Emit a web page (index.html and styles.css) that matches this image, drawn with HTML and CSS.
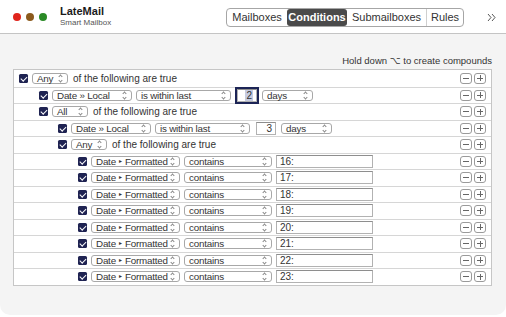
FILE: index.html
```html
<!DOCTYPE html>
<html>
    <head>
        <title>LateMail</title>
        <link rel="stylesheet" href="styles.css">
    </head>
    <body>
        <div class="window">
            <header class="titlebar">
                <div class="lights">
                    <span class="light red"></span>
                    <span class="light amber"></span>
                    <span class="light green"></span>
                </div>
                <div class="title">
                    <div class="name">LateMail</div>
                    <div class="sub">Smart Mailbox</div>
                </div>
                <nav class="segments">
                    <span class="seg seg-mail">Mailboxes</span>
                    <span class="seg seg-cond active">Conditions</span>
                    <span class="seg seg-sub">Submailboxes</span>
                    <span class="seg seg-rules">Rules</span>
                </nav>
                <svg class="more" width="9" height="9" viewBox="0 0 9 9">
                    <path d="M1 1 L4 4.5 L1 8 M5 1 L8 4.5 L5 8" stroke="#444" stroke-width="0.9" fill="none"/>
                </svg>
            </header>

            <main class="content">
                <p class="hint">Hold down ⌥ to create compounds</p>

                <div class="rules">
                    <div class="row l0">
                        <span class="check"></span>
                        <span class="popup w-any">Any<i></i></span>
                        <span class="label">of the following are true</span>
                        <span class="steppers"><b class="minus"></b><b class="plus"></b></span>
                    </div>
                    <div class="row l1">
                        <span class="check"></span>
                        <span class="popup w-local">Date » Local<i></i></span>
                        <span class="popup w-within">is within last<i></i></span>
                        <span class="field num focus"><span class="sel">2</span></span>
                        <span class="popup w-days">days<i></i></span>
                        <span class="steppers"><b class="minus"></b><b class="plus"></b></span>
                    </div>
                    <div class="row l1">
                        <span class="check"></span>
                        <span class="popup w-any">All<i></i></span>
                        <span class="label">of the following are true</span>
                        <span class="steppers"><b class="minus"></b><b class="plus"></b></span>
                    </div>
                    <div class="row l2">
                        <span class="check"></span>
                        <span class="popup w-local">Date » Local<i></i></span>
                        <span class="popup w-within">is within last<i></i></span>
                        <span class="field num">3</span>
                        <span class="popup w-days">days<i></i></span>
                        <span class="steppers"><b class="minus"></b><b class="plus"></b></span>
                    </div>
                    <div class="row l2">
                        <span class="check"></span>
                        <span class="popup w-any">Any<i></i></span>
                        <span class="label">of the following are true</span>
                        <span class="steppers"><b class="minus"></b><b class="plus"></b></span>
                    </div>
                    <div class="row l3">
                        <span class="check"></span>
                        <span class="popup w-formatted">Date <span class="sep">▸</span> Formatted<i></i></span>
                        <span class="popup w-contains">contains<i></i></span>
                        <span class="field text">16:</span>
                        <span class="steppers"><b class="minus"></b><b class="plus"></b></span>
                    </div>
                    <div class="row l3">
                        <span class="check"></span>
                        <span class="popup w-formatted">Date <span class="sep">▸</span> Formatted<i></i></span>
                        <span class="popup w-contains">contains<i></i></span>
                        <span class="field text">17:</span>
                        <span class="steppers"><b class="minus"></b><b class="plus"></b></span>
                    </div>
                    <div class="row l3">
                        <span class="check"></span>
                        <span class="popup w-formatted">Date <span class="sep">▸</span> Formatted<i></i></span>
                        <span class="popup w-contains">contains<i></i></span>
                        <span class="field text">18:</span>
                        <span class="steppers"><b class="minus"></b><b class="plus"></b></span>
                    </div>
                    <div class="row l3">
                        <span class="check"></span>
                        <span class="popup w-formatted">Date <span class="sep">▸</span> Formatted<i></i></span>
                        <span class="popup w-contains">contains<i></i></span>
                        <span class="field text">19:</span>
                        <span class="steppers"><b class="minus"></b><b class="plus"></b></span>
                    </div>
                    <div class="row l3">
                        <span class="check"></span>
                        <span class="popup w-formatted">Date <span class="sep">▸</span> Formatted<i></i></span>
                        <span class="popup w-contains">contains<i></i></span>
                        <span class="field text">20:</span>
                        <span class="steppers"><b class="minus"></b><b class="plus"></b></span>
                    </div>
                    <div class="row l3">
                        <span class="check"></span>
                        <span class="popup w-formatted">Date <span class="sep">▸</span> Formatted<i></i></span>
                        <span class="popup w-contains">contains<i></i></span>
                        <span class="field text">21:</span>
                        <span class="steppers"><b class="minus"></b><b class="plus"></b></span>
                    </div>
                    <div class="row l3">
                        <span class="check"></span>
                        <span class="popup w-formatted">Date <span class="sep">▸</span> Formatted<i></i></span>
                        <span class="popup w-contains">contains<i></i></span>
                        <span class="field text">22:</span>
                        <span class="steppers"><b class="minus"></b><b class="plus"></b></span>
                    </div>
                    <div class="row l3">
                        <span class="check"></span>
                        <span class="popup w-formatted">Date <span class="sep">▸</span> Formatted<i></i></span>
                        <span class="popup w-contains">contains<i></i></span>
                        <span class="field text">23:</span>
                        <span class="steppers"><b class="minus"></b><b class="plus"></b></span>
                    </div>
                </div>
            </main>
        </div>
    </body>
</html>
```

FILE: styles.css
```css
* {
    box-sizing: border-box;
}
body {
    margin: 0;
    background-color: #fff;
    font-family: "Liberation Sans", "DejaVu Sans", Arial, sans-serif;
    color: #222;
}
.window {
    width: 506px;
    height: 315px;
    background-color: #f4f4f4;
    border-radius: 0 0 10px 10px;
    overflow: hidden;
}

/* title bar */
.titlebar {
    height: 34px;
    display: flex;
    align-items: center;
    padding: 0 10px 0 13px;
    background-color: #fff;
    border-bottom: 1px solid #c4c4c4;
}
.lights {
    display: flex;
    gap: 5px;
}
.light {
    width: 8px;
    height: 8px;
    border-radius: 50%;
}
.red {
    background-color: #e0241c;
}
.amber {
    background-color: #8c5a1c;
}
.green {
    background-color: #2a8a26;
}
.title {
    margin-left: 13px;
}
.name {
    font-size: 11px;
    font-weight: bold;
    line-height: 13px;
    color: #1a1a1a;
}
.sub {
    font-size: 8px;
    line-height: 10px;
    color: #555;
}
.segments {
    margin-left: auto;
    margin-top: 2px;
    display: flex;
    height: 19px;
    border: 1px solid #a6a6a6;
    border-radius: 4px;
    background-color: #fff;
}
.seg {
    font-size: 11px;
    line-height: 17px;
    text-align: center;
    color: #333;
}
.seg-mail {
    width: 60px;
}
.seg-cond {
    width: 60px;
}
.seg-sub {
    width: 79px;
}
.seg-rules {
    width: 37px;
    border-left: 1px solid #cfcfcf;
}
.seg.active {
    background-color: #4a4a4a;
    color: #fff;
    font-weight: bold;
    border-radius: 3px;
}
.more {
    margin-left: 23px;
    margin-top: 1px;
}

/* conditions */
.content {
    padding: 0 14px 0 13px;
}
.hint {
    margin: 21px 0 0 0;
    font-size: 9.5px;
    line-height: 12px;
    text-align: right;
    color: #333;
}
.rules {
    margin-top: 2px;
    background-color: #fff;
    border: 1px solid #c6c6c6;
}
.row {
    height: 16.5px;
    display: flex;
    align-items: center;
    gap: 4px;
    padding-right: 5px;
    font-size: 10px;
}
.row + .row {
    border-top: 1px solid #d6d6d6;
}
.l0 {
    padding-left: 5px;
}
.l1 {
    padding-left: 25px;
}
.l2 {
    padding-left: 44px;
}
.l3 {
    padding-left: 64px;
}
.check {
    width: 9px;
    height: 9px;
    border-radius: 1.5px;
    background-color: #1f2352;
    display: flex;
    justify-content: center;
    align-items: center;
}
.check::after {
    content: "";
    width: 2.5px;
    height: 5px;
    margin-top: -1px;
    border: solid #fff;
    border-width: 0 1.5px 1.5px 0;
    transform: rotate(45deg);
}
.label {
    margin-left: 1px;
    color: #333;
}
.popup {
    height: 11px;
    display: flex;
    align-items: center;
    justify-content: space-between;
    padding: 0 5px 0 4px;
    border: 1px solid #a8a8a8;
    border-radius: 3px;
    font-size: 9.8px;
    letter-spacing: -0.2px;
    line-height: 9px;
    color: #333;
    white-space: nowrap;
}
.sep {
    font-size: 6px;
}
.popup i {
    display: flex;
    flex-direction: column;
    align-items: center;
    gap: 1px;
}
.popup i::before,
.popup i::after {
    content: "";
    width: 2px;
    height: 2px;
    border: solid #888;
    border-width: 1px 0 0 1px;
    transform: rotate(45deg);
}
.popup i::after {
    transform: rotate(225deg);
}
.w-any {
    width: 36px;
}
.w-local {
    width: 80px;
}
.w-within {
    width: 95px;
}
.w-days {
    width: 51px;
    margin-left: 1px;
}
.w-formatted {
    width: 89px;
}
.w-contains {
    width: 88px;
}
.field {
    height: 13px;
    padding: 0 3px;
    border: 1px solid #b2b2b2;
    border-top-color: #8e8e8e;
    background-color: #fff;
    line-height: 11px;
    color: #333;
}
.field.num {
    width: 20px;
    margin-left: 2px;
    text-align: right;
}
.field.text {
    width: 97px;
}
.field.focus {
    outline: 2px solid #1c2456;
}
.sel {
    background-color: #c6cbe0;
    padding: 0 1px;
}
.steppers {
    margin-left: auto;
    display: flex;
    gap: 2px;
}
.steppers b {
    width: 12px;
    height: 11px;
    border: 1px solid #9a9a9a;
    border-radius: 3px;
    display: grid;
    place-items: center;
}
.steppers b::before,
.plus::after {
    content: "";
    grid-area: 1 / 1;
    width: 6px;
    height: 1px;
    background-color: #666;
}
.plus::after {
    width: 1px;
    height: 6px;
}
```
